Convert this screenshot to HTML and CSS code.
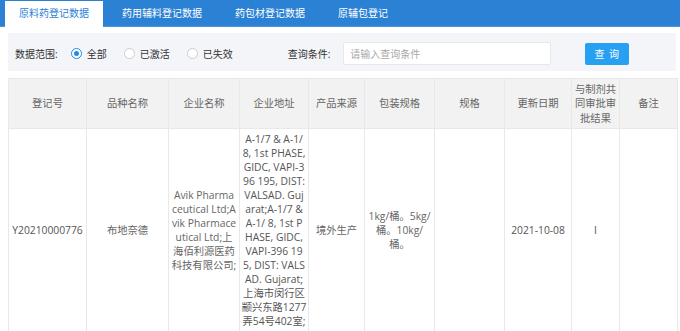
FILE: index.html
```html
<!DOCTYPE html>
<html lang="zh">
<head>
<meta charset="utf-8">
<title>原料药登记数据</title>
<link rel="stylesheet" href="styles.css">
</head>
<body>
<div class="tabs">
  <div class="tab active">原料药登记数据</div>
  <div class="tab">药用辅料登记数据</div>
  <div class="tab">药包材登记数据</div>
  <div class="tab">原辅包登记</div>
</div>
<div class="main">
  <div class="filter">
    <span class="label">数据范围:</span>
    <div class="radios">
      <label class="radio"><span class="dot on"></span>全部</label>
      <label class="radio"><span class="dot"></span>已激活</label>
      <label class="radio"><span class="dot"></span>已失效</label>
    </div>
    <span class="label query-label">查询条件:</span>
    <input class="search" type="text" placeholder="请输入查询条件">
    <button class="btn">查 询</button>
  </div>
  <table class="grid">
    <colgroup>
      <col class="w78"><col class="w82"><col class="w71"><col class="w69"><col class="w56">
      <col class="w70"><col class="w70"><col class="w67"><col class="w48"><col class="w58">
    </colgroup>
    <thead>
      <tr>
        <th>登记号</th><th>品种名称</th><th>企业名称</th><th>企业地址</th><th>产品来源</th>
        <th>包装规格</th><th>规格</th><th>更新日期</th>
        <th><span class="ln">与制剂共</span><span class="ln">同审批审</span><span class="ln">批结果</span></th>
        <th>备注</th>
      </tr>
    </thead>
    <tbody>
      <tr>
        <td class="dark">Y20210000776</td>
        <td>布地奈德</td>
        <td><span class="ln">Avik Pharma</span><span class="ln">ceutical Ltd;A</span><span class="ln">vik Pharmace</span><span class="ln">utical Ltd;上</span><span class="ln">海佰利源医药</span><span class="ln">科技有限公司;</span></td>
        <td class="dark"><span class="ln">A-1/7 &amp; A-1/</span><span class="ln">8, 1st PHASE,</span><span class="ln">GIDC, VAPI-3</span><span class="ln">96 195, DIST:</span><span class="ln">VALSAD. Guj</span><span class="ln">arat;A-1/7 &amp;</span><span class="ln">A-1/ 8, 1st P</span><span class="ln">HASE, GIDC,</span><span class="ln">VAPI-396 19</span><span class="ln">5, DIST: VALS</span><span class="ln">AD. Gujarat;</span><span class="ln">上海市闵行区</span><span class="ln">颛兴东路1277</span><span class="ln">弄54号402室;</span></td>
        <td>境外生产</td>
        <td><span class="ln">1kg/桶。5kg/</span><span class="ln">桶。10kg/</span><span class="ln">桶。</span></td>
        <td></td>
        <td class="dark">2021-10-08</td>
        <td class="dark">I</td>
        <td></td>
      </tr>
    </tbody>
  </table>
</div>
</body>
</html>
```
FILE: styles.css
```css
* { box-sizing: border-box; }
html, body { margin: 0; padding: 0; background: #fff; }
body {
  font-family: "Open Sans", "Noto Sans CJK SC", sans-serif;
  font-size: 10px;
  color: #333;
  height: 331px;
  overflow: hidden;
}
.tabs {
  display: flex;
  align-items: flex-end;
  height: 27px;
  background: #2b82d5;
  border-bottom: 1px solid #4a95dc;
}
.tab {
  margin-left: 5px;
  padding: 0 14px;
  height: 25px;
  line-height: 25px;
  color: #fff;
  white-space: nowrap;
}
.tab.active {
  background: #fff;
  color: #2b7fd6;
  height: 26px;
  margin-bottom: -1px;
}
.main {
  padding: 6px 4px 0 8px;
}
.filter {
  display: flex;
  align-items: center;
  background: #f4f5f8;
  padding: 9px 0 6px 7px;
  color: #333;
}
.radios {
  display: flex;
  align-items: center;
  margin-left: 13px;
}
.radio {
  display: flex;
  align-items: center;
  gap: 5px;
  margin-right: 17px;
}
.dot {
  width: 11px;
  height: 11px;
  border-radius: 50%;
  border: 1px solid #c9ccd2;
  background: #fff;
  display: inline-flex;
  align-items: center;
  justify-content: center;
}
.dot.on {
  border-color: #1f8ce8;
}
.dot.on::after {
  content: "";
  width: 5px;
  height: 5px;
  border-radius: 50%;
  background: #1f8ce8;
}
.query-label {
  margin-left: 38px;
}
.search {
  margin-left: 13px;
  width: 208px;
  height: 23px;
  border: 1px solid #e6e8eb;
  border-radius: 2px;
  background: #fff;
  padding: 0 6px;
  font-family: "Open Sans", "Noto Sans CJK SC", sans-serif;
  font-size: 10px;
  outline: none;
}
.search::placeholder { color: #a8a8a8; }
.btn {
  margin-left: 34px;
  width: 44px;
  height: 22px;
  border: none;
  border-radius: 2px;
  background: #27a0f2;
  color: #fff;
  font-family: "Open Sans", "Noto Sans CJK SC", sans-serif;
  font-size: 10px;
  letter-spacing: 1px;
  padding: 0;
}
.grid {
  margin-top: 7px;
  width: 669px;
  border-collapse: collapse;
  table-layout: fixed;
  border: 1px solid #e8e8e8;
  font-size: 10.3px;
}
.w78 { width: 78px; }
.w82 { width: 82px; }
.w71 { width: 71px; }
.w69 { width: 69px; }
.w56 { width: 56px; }
.w70 { width: 70px; }
.w67 { width: 67px; }
.w48 { width: 48px; }
.w58 { width: 58px; }
.grid th, .grid td {
  border: 1px solid #e8e8e8;
  text-align: center;
  vertical-align: middle;
  line-height: 14px;
  padding: 3px 0;
  white-space: nowrap;
  overflow: hidden;
}
.ln { display: block; }
.grid th {
  background: #f2f2f2;
  color: #666;
  font-weight: normal;
  height: 50px;
  padding: 2px 0;
  line-height: 14.5px;
}
.grid td {
  color: #666;
}
.grid td.dark { color: #555; }
```
